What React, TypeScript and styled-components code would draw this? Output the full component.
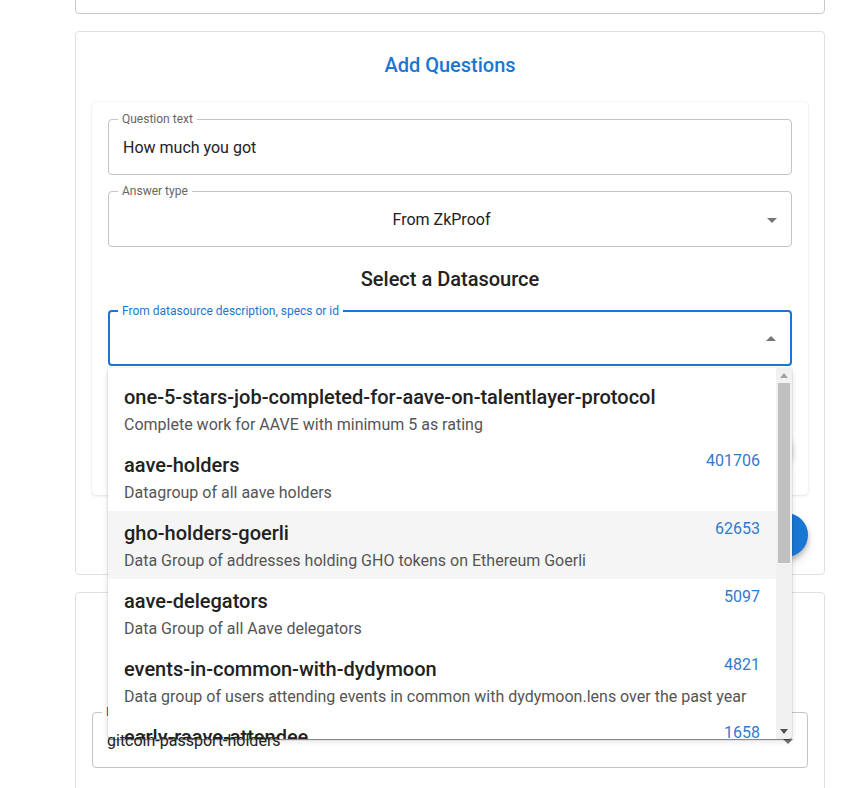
import { FC } from 'react';
import styled, { createGlobalStyle } from 'styled-components';

const GlobalStyle = createGlobalStyle`
  body {
    margin: 0;
    background: #fff;
    font-family: Roboto, 'Noto Sans', Arial, sans-serif;
    color: #222;
  }
  * {
    box-sizing: border-box;
  }
`;

const StyledPage = styled.div`
  display: flex;
  flex-direction: column;
  gap: 17px;
  width: 750px;
  height: 788px;
  margin-left: 75px;
  overflow: hidden;
`;

const StyledCard = styled.div`
  flex-shrink: 0;
  display: flex;
  flex-direction: column;
  border: solid 1px #e0e0e0;
  border-radius: 4px;
  background: #fff;
  padding: 16px 16px 17px;
`;

const StyledTopCard = styled(StyledCard)`
  height: 34px;
  margin-top: -20px;
  padding: 0;
  border-color: #c9c9c9;
`;

const StyledBottomCard = styled(StyledCard)`
  min-height: 260px;
  padding-top: 112px;
`;

const StyledTitle = styled.h2`
  margin: 0 0 20px;
  font-size: 20px;
  font-weight: 500;
  line-height: 34px;
  text-align: center;
  color: #1976d2;
`;

const StyledPaper = styled.div`
  display: flex;
  flex-direction: column;
  padding: 10px 16px 16px;
  border-radius: 4px;
  background: #fff;
  box-shadow: 0 1px 3px rgba(0, 0, 0, 0.1), 0 0 1px rgba(0, 0, 0, 0.12);
`;

const StyledSubtitle = styled.h3`
  margin: 16px 0 9px;
  font-size: 20px;
  font-weight: 500;
  line-height: 32px;
  text-align: center;
  color: #222;
`;

const StyledField = styled.fieldset<{ $focused?: boolean }>`
  margin: 0;
  min-width: 0;
  padding: 0 7px 0 ${props => (props.$focused ? 13 : 14)}px;
  border: solid ${props => (props.$focused ? '2px #1976d2' : '1px #c4c4c4')};
  border-radius: 4px;
  background: #fff;
`;

const StyledGapField = styled(StyledField)`
  margin-top: 9px;
`;

const StyledLegend = styled.legend<{ $color?: string }>`
  margin-left: -5px;
  padding: 0 4px;
  font-size: 12px;
  line-height: 14px;
  color: ${props => props.$color ?? '#666'};
`;

const StyledValueRow = styled.div<{ $focused?: boolean }>`
  display: flex;
  align-items: center;
  padding: ${props => (props.$focused ? '9px 0 13px' : '10px 0 14px')};
`;

const StyledValue = styled.span<{ $center?: boolean; $raised?: boolean }>`
  flex: 1;
  min-height: 24px;
  font-size: 16px;
  line-height: 24px;
  color: #222;
  text-align: ${props => (props.$center ? 'center' : 'left')};
  ${props => props.$raised && 'position: relative; z-index: 20;'}
`;

const StyledAutocomplete = styled.div`
  position: relative;
`;

const StyledPopover = styled.div`
  position: absolute;
  top: calc(100% + 2px);
  left: 0;
  right: 0;
  height: 371px;
  z-index: 10;
  display: flex;
  background: #fff;
  border-radius: 0 0 4px 4px;
  box-shadow: 0 1px 1px rgba(0, 0, 0, 0.45), 0 2px 6px rgba(0, 0, 0, 0.12),
    0 0 1px rgba(0, 0, 0, 0.2);
  overflow: hidden;
`;

const StyledList = styled.ul`
  flex: 1;
  min-width: 0;
  margin: 0;
  padding: 7px 0 0;
  list-style: none;
  overflow: hidden;
`;

const StyledOption = styled.li<{ $active?: boolean }>`
  display: grid;
  grid-template-columns: 1fr auto;
  column-gap: 12px;
  height: 68px;
  padding: 6px 16px;
  background: ${props => (props.$active ? '#f5f5f5' : 'transparent')};
`;

const StyledOptionName = styled.span`
  font-size: 20px;
  font-weight: 500;
  line-height: 32px;
  color: #222;
  white-space: nowrap;
`;

const StyledOptionCount = styled.span`
  margin-top: 2px;
  font-size: 16px;
  line-height: 20px;
  color: #2f7bcc;
`;

const StyledOptionDesc = styled.span`
  grid-column: 1 / -1;
  margin-top: -1px;
  font-size: 16px;
  line-height: 24px;
  color: #555;
  white-space: nowrap;
`;

const StyledScrollbar = styled.div`
  display: flex;
  flex-direction: column;
  width: 16px;
  background: #f1f1f1;
`;

const StyledScrollButton = styled.div`
  display: flex;
  align-items: center;
  justify-content: center;
  height: 15px;
`;

const StyledScrollThumb = styled.div`
  height: 180px;
  margin: 0 2px;
  background: #c1c1c1;
`;

const StyledScrollSpacer = styled.div`
  flex: 1;
`;

const StyledActionRow = styled.div<{ $height: number; $top: number }>`
  display: flex;
  justify-content: flex-end;
  align-items: flex-start;
  height: ${props => props.$height}px;
  padding-top: ${props => props.$top}px;
`;

const StyledRoundButton = styled.div`
  width: 40px;
  height: 40px;
  border-radius: 50%;
  background: #fff;
  box-shadow: 0 2px 6px rgba(0, 0, 0, 0.25);
`;

const StyledFab = styled.div`
  width: 44px;
  height: 44px;
  border-radius: 50%;
  background: #1976d2;
  box-shadow: 0 3px 5px rgba(0, 0, 0, 0.2), 0 6px 10px rgba(0, 0, 0, 0.14);
`;

interface Datasource {
  name: string;
  description?: string;
  count?: string;
  active?: boolean;
}

const datasources: Datasource[] = [
  {
    name: 'one-5-stars-job-completed-for-aave-on-talentlayer-protocol',
    description: 'Complete work for AAVE with minimum 5 as rating',
  },
  {
    name: 'aave-holders',
    description: 'Datagroup of all aave holders',
    count: '401706',
  },
  {
    name: 'gho-holders-goerli',
    description: 'Data Group of addresses holding GHO tokens on Ethereum Goerli',
    count: '62653',
    active: true,
  },
  {
    name: 'aave-delegators',
    description: 'Data Group of all Aave delegators',
    count: '5097',
  },
  {
    name: 'events-in-common-with-dydymoon',
    description:
      'Data group of users attending events in common with dydymoon.lens over the past year',
    count: '4821',
  },
  { name: 'early-raave-attendee', count: '1658' },
];

const ArrowIcon: FC<{ up?: boolean }> = ({ up }) => (
  <svg width="24" height="24" viewBox="0 0 24 24" fill="rgba(0,0,0,0.54)">
    <path d={up ? 'M7 14l5-5 5 5z' : 'M7 10l5 5 5-5z'} />
  </svg>
);

const ScrollArrow: FC<{ up?: boolean; color: string }> = ({ up, color }) => (
  <svg width="8" height="5" viewBox="0 0 8 5" fill={color}>
    <path d={up ? 'M0 5L4 0L8 5z' : 'M0 0L8 0L4 5z'} />
  </svg>
);

const DatasourceList: FC = () => (
  <StyledPopover>
    <StyledList>
      {datasources.map(source => (
        <StyledOption key={source.name} $active={source.active}>
          <StyledOptionName>{source.name}</StyledOptionName>
          <StyledOptionCount>{source.count}</StyledOptionCount>
          {source.description && (
            <StyledOptionDesc>{source.description}</StyledOptionDesc>
          )}
        </StyledOption>
      ))}
    </StyledList>
    <StyledScrollbar>
      <StyledScrollButton>
        <ScrollArrow up color="#a3a3a3" />
      </StyledScrollButton>
      <StyledScrollThumb />
      <StyledScrollSpacer />
      <StyledScrollButton>
        <ScrollArrow color="#505050" />
      </StyledScrollButton>
    </StyledScrollbar>
  </StyledPopover>
);

const App: FC = () => {
  return (
    <>
      <GlobalStyle />
      <StyledPage>
        <StyledTopCard />
        <StyledCard>
          <StyledTitle>Add Questions</StyledTitle>
          <StyledPaper>
            <StyledField>
              <StyledLegend>Question text</StyledLegend>
              <StyledValueRow>
                <StyledValue>How much you got</StyledValue>
              </StyledValueRow>
            </StyledField>
            <StyledGapField>
              <StyledLegend>Answer type</StyledLegend>
              <StyledValueRow>
                <StyledValue $center>From ZkProof</StyledValue>
                <ArrowIcon />
              </StyledValueRow>
            </StyledGapField>
            <StyledSubtitle>Select a Datasource</StyledSubtitle>
            <StyledAutocomplete>
              <StyledField $focused>
                <StyledLegend $color="#1976d2">
                  From datasource description, specs or id
                </StyledLegend>
                <StyledValueRow $focused>
                  <StyledValue />
                  <ArrowIcon up />
                </StyledValueRow>
              </StyledField>
              <DatasourceList />
            </StyledAutocomplete>
            <StyledActionRow $height={113} $top={64}>
              <StyledRoundButton />
            </StyledActionRow>
          </StyledPaper>
          <StyledActionRow $height={62} $top={18}>
            <StyledFab />
          </StyledActionRow>
        </StyledCard>
        <StyledBottomCard>
          <StyledField>
            <StyledLegend $color="#d32f2f">Datasource</StyledLegend>
            <StyledValueRow>
              <StyledValue $raised>gitcoin-passport-holders</StyledValue>
              <ArrowIcon />
            </StyledValueRow>
          </StyledField>
        </StyledBottomCard>
      </StyledPage>
    </>
  );
};

export default App;
